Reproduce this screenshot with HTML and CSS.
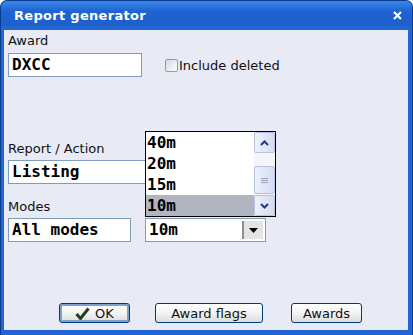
FILE: index.html
```html
<!DOCTYPE html>
<html lang="en">
<head>
  <meta charset="UTF-8">
  <title>Report generator</title>
  <link rel="stylesheet" href="styles.css">
</head>
<body>
  <div class="window">
    <div class="titlebar">
      <span class="title">Report generator</span>
      <svg class="close" width="9" height="9" viewBox="0 0 9 9"><path d="M1 1l7 7M8 1l-7 7" stroke="#fff" stroke-width="2.2"/></svg>
    </div>
    <div class="content">
      <div class="label">Award</div>
      <div class="row award-row">
        <div class="field award-field">DXCC</div>
        <label class="check"><span class="box"></span>Include deleted</label>
      </div>

      <div class="label report-label">Report / Action</div>
      <div class="row">
        <div class="field listing-field">Listing</div>
      </div>

      <div class="label modes-label">Modes</div>
      <div class="row modes-row">
        <div class="field modes-field">All modes</div>
        <div class="field combo">
          <span>10m</span>
          <span class="combo-btn">
            <svg width="9" height="5" viewBox="0 0 9 5"><path d="M0 0h9L4.5 5z" fill="#000"/></svg>
          </span>
        </div>
      </div>

      <div class="buttons">
        <button class="btn btn-ok">
          <svg class="tick" width="15" height="13" viewBox="0 0 15 13"><path d="M1.5 7l4 4.5L13.5 1.5" stroke="#1f3f1a" stroke-width="3" fill="none"/></svg>
          OK
        </button>
        <button class="btn btn-flags">Award flags</button>
        <button class="btn btn-awards">Awards</button>
      </div>

      <div class="popup">
        <ul class="items">
          <li>40m</li>
          <li>20m</li>
          <li>15m</li>
          <li class="selected">10m</li>
        </ul>
        <div class="scrollbar">
          <div class="sb-btn">
            <svg width="9" height="6" viewBox="0 0 9 6"><path d="M1 5l3.5-3.5L8 5" stroke="#1c3d7a" stroke-width="2" fill="none"/></svg>
          </div>
          <div class="sb-track">
            <div class="sb-thumb">
              <svg width="7" height="7" viewBox="0 0 7 7"><path d="M0 1.5h7M0 3.5h7M0 5.5h7" stroke="#9aa5bd" stroke-width="1"/></svg>
            </div>
          </div>
          <div class="sb-btn">
            <svg width="9" height="6" viewBox="0 0 9 6"><path d="M1 1l3.5 3.5L8 1" stroke="#1c3d7a" stroke-width="2" fill="none"/></svg>
          </div>
        </div>
      </div>
    </div>
  </div>
</body>
</html>
```

FILE: styles.css
```css
body {
  margin: 0;
  font-family: "DejaVu Sans", Verdana, sans-serif;
}

.window {
  width: 413px;
  height: 335px;
  display: flex;
  flex-direction: column;
  background: #2164d4;
  border-radius: 7px 7px 0 0;
  box-sizing: border-box;
  border: 1px solid #0b3b8c;
  border-bottom: none;
  overflow: hidden;
}

.titlebar {
  height: 29px;
  display: flex;
  align-items: center;
  justify-content: space-between;
  padding: 0 10px 0 13px;
  background: linear-gradient(#3a86ea, #1f64d2 35%, #1c5fcd 80%, #2569d4);
  color: white;
}

.title {
  font-weight: bold;
  font-size: 13px;
  letter-spacing: 0.3px;
}

.content {
  position: relative;
  flex: 1;
  margin: 0 4px 5px 3px;
  background: #e8ebf5;
  padding: 2px 0 0 4px;
}

.label {
  font-size: 13px;
  line-height: 18px;
  color: #111;
}

.row {
  display: flex;
  align-items: center;
}

.field {
  box-sizing: border-box;
  height: 24px;
  border: 1px solid #7f9db9;
  background: white;
  font-family: "DejaVu Sans Mono", monospace;
  font-weight: bold;
  font-size: 16px;
  line-height: 22px;
  padding-left: 3px;
}

.award-row {
  margin-top: 3px;
}

.award-field {
  width: 134px;
}

.check {
  display: flex;
  align-items: center;
  margin-left: 23px;
  font-size: 13px;
  color: #111;
}

.box {
  width: 11px;
  height: 11px;
  border: 1px solid #8e9ab0;
  border-radius: 2px;
  background: linear-gradient(135deg, #d6d9e2, #fdfdfd);
  margin-right: 1px;
}

.report-label {
  margin-top: 63px;
}

.listing-field {
  width: 150px;
  margin-top: 2px;
}

.modes-label {
  margin-top: 14px;
}

.modes-row {
  margin-top: 2px;
  gap: 14px;
}

.modes-field {
  width: 123px;
}

.combo {
  width: 121px;
  display: flex;
  justify-content: space-between;
  padding-right: 2px;
}

.combo-btn {
  width: 19px;
  height: 18px;
  margin-top: 2px;
  border-left: 2px solid #8f8f8f;
  background: #e4e4e4;
  display: flex;
  align-items: center;
  justify-content: center;
}

.buttons {
  display: flex;
  margin-top: 61px;
  padding-left: 51px;
}

.btn {
  height: 20px;
  box-sizing: border-box;
  border: 1px solid #003c74;
  border-radius: 3px;
  background: linear-gradient(#ffffff, #f3f3f3 50%, #dcdcdc);
  font-family: "DejaVu Sans", Verdana, sans-serif;
  font-size: 13px;
  padding: 0;
  color: #111;
  line-height: 17px;
  display: flex;
  align-items: center;
  justify-content: center;
}

.btn-ok {
  width: 71px;
  box-shadow: inset 0 0 0 2px #7da2ce;
  gap: 5px;
}

.btn-flags {
  width: 108px;
  margin-left: 25px;
}

.btn-awards {
  width: 71px;
  margin-left: 28px;
}

.popup {
  position: absolute;
  left: 141px;
  top: 101px;
  width: 131px;
  height: 86px;
  box-sizing: border-box;
  border: 1px solid #000;
  background: white;
  display: flex;
}

.items {
  list-style: none;
  margin: 0;
  padding: 0;
  flex: 1;
  font-family: "DejaVu Sans Mono", monospace;
  font-weight: bold;
  font-size: 16px;
}

.items li {
  height: 21px;
  line-height: 21px;
  padding-left: 1px;
}

.items .selected {
  background: #b2b4c0;
}

.scrollbar {
  width: 21px;
  display: flex;
  flex-direction: column;
  background: #f4f5f8;
}

.sb-btn {
  height: 21px;
  box-sizing: border-box;
  border: 1px solid #b6c2de;
  border-radius: 2px;
  background: linear-gradient(90deg, #eef1fb, #d4dcf1);
  display: flex;
  align-items: center;
  justify-content: center;
}

.sb-track {
  flex: 1;
  padding-top: 13px;
}

.sb-thumb {
  height: 28px;
  box-sizing: border-box;
  border: 1px solid #b6c2de;
  border-radius: 2px;
  background: linear-gradient(90deg, #eef1fb, #d4dcf1);
  display: flex;
  align-items: center;
  justify-content: center;
}
```
